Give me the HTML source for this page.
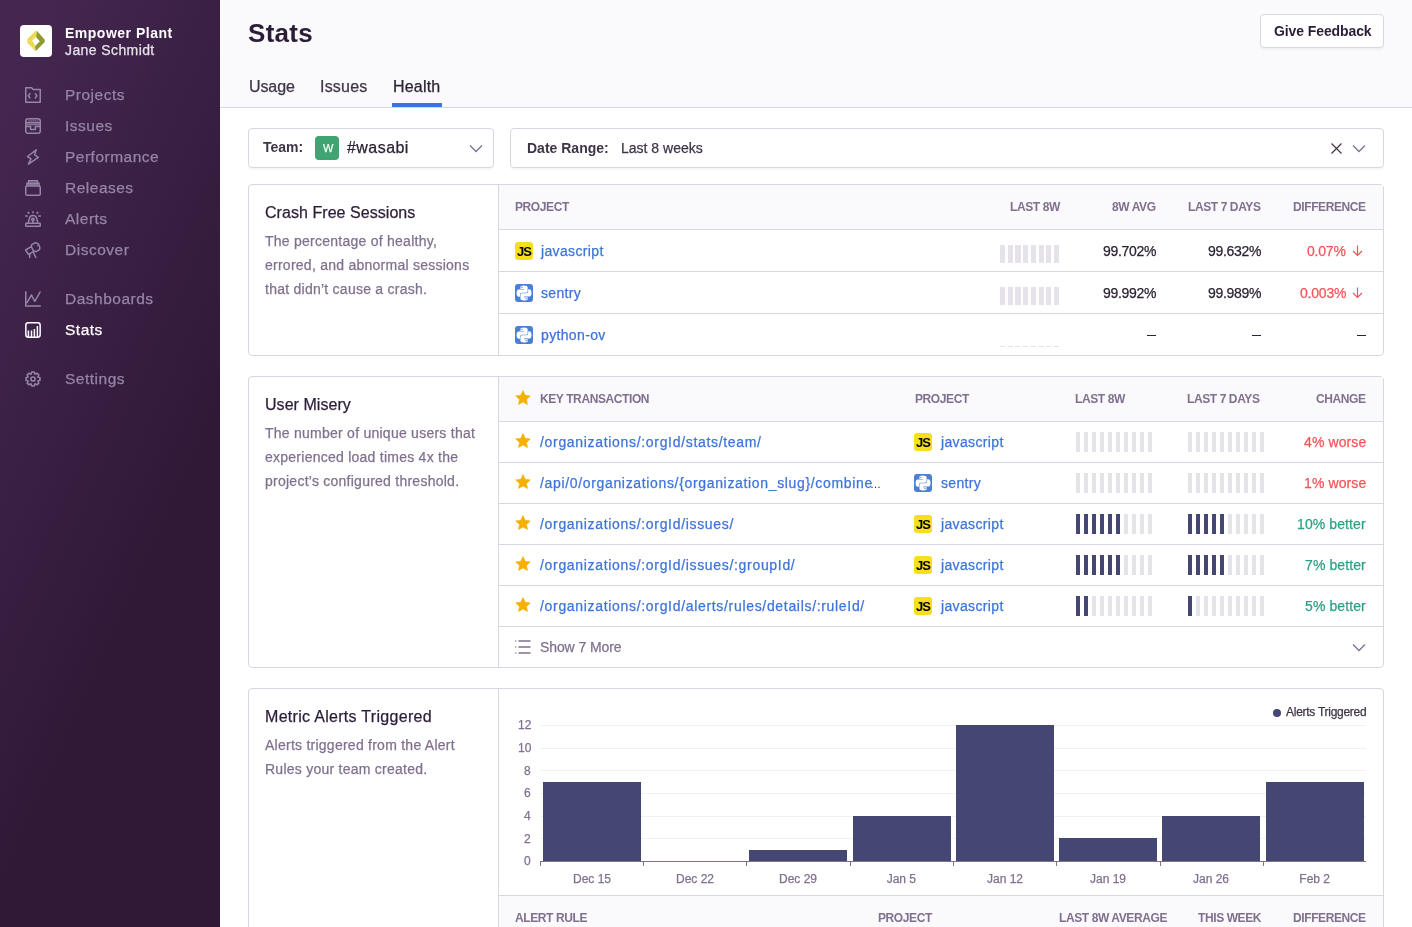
<!DOCTYPE html>
<html><head><meta charset="utf-8">
<style>
*{box-sizing:border-box;margin:0;padding:0}
html,body{width:1412px;height:927px;overflow:hidden;background:#fff;font-family:"Liberation Sans",sans-serif;color:#2B2233}
.abs{position:absolute}
.t{position:absolute;white-space:nowrap;line-height:1;will-change:transform;-webkit-text-stroke:0.25px currentColor}
svg{position:absolute;overflow:visible}
</style></head><body>
<div class="abs" style="left:0;top:0;width:220px;height:927px;background:linear-gradient(294.17deg,#2f1937 35.57%,#452650 92.42%,#452650 92.42%)"></div>
<div class="abs" style="left:20px;top:25px;width:32px;height:32px;background:#fff;border-radius:4px"></div>
<svg style="left:18px;top:23px" width="36" height="36" viewBox="0 0 927 927">
<path d="M465 185L235 415L235 510L440 720L455 590L370 455L470 360L490 210Z" fill="#EEDF63"/>
<path d="M490 205L690 430L690 490L455 725L440 600L560 470L465 370Z" fill="#8F9A2F"/>
<path d="M470 350Q460 445 368 455Q455 470 448 592Q462 478 562 468Q470 460 470 350Z" fill="#fff"/>
<g fill="#DCC521"><circle cx="425" cy="295" r="14"/><circle cx="372" cy="345" r="14"/><circle cx="320" cy="370" r="14"/><circle cx="345" cy="400" r="14"/><circle cx="295" cy="425" r="14"/><circle cx="320" cy="475" r="14"/><circle cx="320" cy="525" r="14"/><circle cx="372" cy="525" r="14"/><circle cx="372" cy="578" r="14"/><circle cx="450" cy="322" r="12"/></g>
</svg>
<div class="t" style="left:65px;top:26.15px;font-size:14px;color:#fff;font-weight:bold;-webkit-text-stroke:0;letter-spacing:0.5px;">Empower Plant</div>
<div class="t" style="left:65px;top:43.15px;font-size:14px;color:#E6E1EA;letter-spacing:0.4px;">Jane Schmidt</div>
<svg style="left:25px;top:86.5px" width="16" height="16" viewBox="0 0 16 16" fill="none" stroke="#9586A5" stroke-width="1.5"><path d="M0.75 15.25V0.75H6.6L8.2 2.5H15.25V15.25Z" stroke-linejoin="round"/><path d="M4.9 6.6L3.3 8.8L4.9 11M10.3 6.6L11.9 8.8L10.3 11" stroke-linecap="round"/></svg>
<div class="t" style="left:65px;top:87.38px;font-size:15.5px;color:#9586A5;letter-spacing:0.5px;">Projects</div>
<svg style="left:25px;top:117.5px" width="16" height="16" viewBox="0 0 16 16" fill="none" stroke="#9586A5" stroke-width="1.5"><rect x="0.75" y="0.75" width="14.5" height="14.5" rx="2.3"/><path d="M1 4.4h14M1 8.4h4.6v3h4.8v-3H15"/><rect x="1.2" y="5.4" width="13.6" height="2" fill="#9586A5" stroke="none" opacity="0.8"/><rect x="3" y="1.8" width="10" height="1.6" fill="#9586A5" stroke="none" opacity="0.45"/></svg>
<div class="t" style="left:65px;top:118.38px;font-size:15.5px;color:#9586A5;letter-spacing:0.5px;">Issues</div>
<svg style="left:25px;top:148.5px" width="16" height="16" viewBox="0 0 16 16" fill="none" stroke="#9586A5" stroke-width="1.5"><path d="M11.2 0.8L2.5 7.5L6 9.8L3.4 15.1L13.4 8.4L9.6 5.9Z" stroke-linejoin="round"/></svg>
<div class="t" style="left:65px;top:149.38px;font-size:15.5px;color:#9586A5;letter-spacing:0.5px;">Performance</div>
<svg style="left:25px;top:179.5px" width="16" height="16" viewBox="0 0 16 16" fill="none" stroke="#9586A5" stroke-width="1.5"><rect x="0.75" y="6.1" width="14.5" height="9.15" rx="1.3"/><path d="M1.9 6.1V3.3H14.1V6.1M3.5 3.3V0.75H12.5V3.3" stroke-linejoin="round"/><rect x="2.6" y="3.9" width="10.8" height="1.6" fill="#9586A5" stroke="none" opacity="0.8"/><rect x="4.2" y="1.4" width="7.6" height="1.3" fill="#9586A5" stroke="none" opacity="0.45"/></svg>
<div class="t" style="left:65px;top:180.38px;font-size:15.5px;color:#9586A5;letter-spacing:0.5px;">Releases</div>
<svg style="left:25px;top:210.5px" width="16" height="16" viewBox="0 0 16 16" fill="none" stroke="#9586A5" stroke-width="1.5"><rect x="0.75" y="12.2" width="14.5" height="3.05" rx="0.5"/><path d="M3.2 12.2L4.3 7.3Q4.8 4.4 8 4.4Q11.2 4.4 11.7 7.3L12.8 12.2"/><circle cx="7.9" cy="8.4" r="1.2"/><path d="M7.9 9.6V12.2M7.9 0.2V2.2M2.7 1L4.3 2.6M13.2 1L11.6 2.6M0.1 5.1H2.7M13.3 5.1H15.9"/></svg>
<div class="t" style="left:65px;top:211.38px;font-size:15.5px;color:#9586A5;letter-spacing:0.5px;">Alerts</div>
<svg style="left:25px;top:241.5px" width="16" height="16" viewBox="0 0 16 16" fill="none" stroke="#9586A5" stroke-width="1.5"><path d="M0.6 8L6.3 4.6L8.8 9.3L3.4 12.3Z" stroke-linejoin="round"/><path d="M6.3 4.6L6.6 2.9L10.2 0.7Q15.6 1.5 14.6 7.6L11 9.6L8.8 9.3" stroke-linejoin="round"/><circle cx="12.6" cy="3.8" r="0.7" fill="#9586A5" stroke="none"/><path d="M4.8 12L4.6 15.5M8.4 10.5L10.9 15.5" stroke-linecap="round"/></svg>
<div class="t" style="left:65px;top:242.38px;font-size:15.5px;color:#9586A5;letter-spacing:0.5px;">Discover</div>
<svg style="left:25px;top:290.5px" width="16" height="16" viewBox="0 0 16 16" fill="none" stroke="#9586A5" stroke-width="1.5"><path d="M0.75 0.2V15.1H15.8"/><path d="M1.5 12.4L6.5 4L9.8 10.3L15.4 0.5" stroke-linejoin="round"/></svg>
<div class="t" style="left:65px;top:291.38px;font-size:15.5px;color:#9586A5;letter-spacing:0.5px;">Dashboards</div>
<svg style="left:25px;top:321.5px" width="16" height="16" viewBox="0 0 16 16" fill="none" stroke="#fff" stroke-width="1.5"><rect x="0.85" y="0.85" width="14.3" height="14.3" rx="2.4"/><path d="M3.4 15V8.4M6.5 15V8.4M9.4 15V7.1M12.4 15V4"/></svg>
<div class="t" style="left:65px;top:322.38px;font-size:15.5px;color:#fff;letter-spacing:0.5px;">Stats</div>
<svg style="left:25px;top:370.5px" width="16" height="16" viewBox="0 0 16 16" fill="none" stroke="#9586A5" stroke-width="1.5"><path d="M6.02 3.19 L6.80 1.00 L9.20 1.00 L9.98 3.19 L10.00 3.20 L12.10 2.20 L13.80 3.90 L12.80 6.00 L12.81 6.02 L15.00 6.80 L15.00 9.20 L12.81 9.98 L12.80 10.00 L13.80 12.10 L12.10 13.80 L10.00 12.80 L9.98 12.81 L9.20 15.00 L6.80 15.00 L6.02 12.81 L6.00 12.80 L3.90 13.80 L2.20 12.10 L3.20 10.00 L3.19 9.98 L1.00 9.20 L1.00 6.80 L3.19 6.02 L3.20 6.00 L2.20 3.90 L3.90 2.20 L6.00 3.20Z" stroke-linejoin="round"/><circle cx="8" cy="8" r="2.1"/></svg>
<div class="t" style="left:65px;top:371.38px;font-size:15.5px;color:#9586A5;letter-spacing:0.5px;">Settings</div>
<div class="abs" style="left:220px;top:0px;width:1192px;height:108px;background:#FAF9FB;border-bottom:1px solid #DBD6E1"></div>
<div class="t" style="left:248px;top:20.29px;font-size:26px;color:#2B1D38;font-weight:bold;-webkit-text-stroke:0;letter-spacing:0.3px;">Stats</div>
<div class="t" style="left:249px;top:79.46px;font-size:16px;color:#3E3446;letter-spacing:-0.1px;">Usage</div>
<div class="t" style="left:320px;top:79.46px;font-size:16px;color:#3E3446;letter-spacing:0.2px;">Issues</div>
<div class="t" style="left:393px;top:79.46px;font-size:16px;color:#2B2233;letter-spacing:0.2px;">Health</div>
<div class="abs" style="left:392px;top:103px;width:50px;height:4px;background:#3D74DB"></div>
<div class="abs" style="left:1260px;top:14px;width:124px;height:34px;background:#fff;border:1px solid #DBD6E1;border-radius:4px;box-shadow:0 2px 0 rgba(43,34,51,0.04)"></div>
<div class="t" style="left:1273.5px;top:24.15px;font-size:14px;color:#2B1D38;font-weight:bold;-webkit-text-stroke:0;letter-spacing:-0.1px;">Give Feedback</div>
<div class="abs" style="left:248px;top:128px;width:246px;height:40px;border:1px solid #DBD6E1;border-radius:4px;box-shadow:0 2px 0 rgba(43,34,51,0.04)"></div>
<div class="t" style="left:263px;top:140.15px;font-size:14px;color:#3E3446;font-weight:bold;-webkit-text-stroke:0;letter-spacing:0px;">Team:</div>
<div class="abs" style="left:315px;top:136px;width:24px;height:24px;background:#3FA372;border-radius:4px"></div>
<div class="t" style="left:322.5px;top:142.69px;font-size:11px;color:rgba(255,255,255,0.92);letter-spacing:0px;">W</div>
<div class="t" style="left:347px;top:139.86px;font-size:16px;color:#2B2233;letter-spacing:0.45px;">#wasabi</div>
<svg style="left:469px;top:144px" width="14" height="9" viewBox="0 0 14 9" fill="none" stroke="#80708F" stroke-width="1.3"><path d="M1 1.5l6 6 6-6"/></svg>
<div class="abs" style="left:510px;top:128px;width:874px;height:40px;border:1px solid #DBD6E1;border-radius:4px;box-shadow:0 2px 0 rgba(43,34,51,0.04)"></div>
<div class="t" style="left:527px;top:141.15px;font-size:14px;color:#3E3446;font-weight:bold;-webkit-text-stroke:0;letter-spacing:0px;">Date Range:</div>
<div class="t" style="left:621px;top:141.15px;font-size:14px;color:#3E3446;letter-spacing:0px;">Last 8 weeks</div>
<svg style="left:1331px;top:143px" width="11" height="11" viewBox="0 0 11 11" fill="none" stroke="#3E3446" stroke-width="1.15"><path d="M0.5 0.5l10 10M10.5 0.5l-10 10"/></svg>
<svg style="left:1352px;top:144px" width="14" height="9" viewBox="0 0 14 9" fill="none" stroke="#80708F" stroke-width="1.3"><path d="M1 1.5l6 6 6-6"/></svg>
<div class="abs" style="left:248px;top:184px;width:1136px;height:172px;border:1px solid #DBD6E1;border-radius:4px;background:#fff"></div>
<div class="abs" style="left:499px;top:185px;width:884px;height:44px;background:#FAF9FB"></div>
<div class="abs" style="left:498px;top:185px;width:1px;height:170px;background:#DBD6E1"></div>
<div class="abs" style="left:499px;top:229px;width:884px;height:1px;background:#DBD6E1"></div>
<div class="abs" style="left:499px;top:271px;width:884px;height:1px;background:#DBD6E1"></div>
<div class="abs" style="left:499px;top:313px;width:884px;height:1px;background:#DBD6E1"></div>
<div class="t" style="left:265px;top:204.66px;font-size:16px;color:#2B1D38;letter-spacing:0.05px;">Crash Free Sessions</div>
<div class="t" style="left:265px;top:233.65px;font-size:14px;color:#80708F;letter-spacing:0.25px;">The percentage of healthy,</div>
<div class="t" style="left:265px;top:257.65px;font-size:14px;color:#80708F;letter-spacing:0.25px;">errored, and abnormal sessions</div>
<div class="t" style="left:265px;top:281.65px;font-size:14px;color:#80708F;letter-spacing:0.25px;">that didn’t cause a crash.</div>
<div class="t" style="left:515px;top:200.84px;font-size:12px;color:#80708F;font-weight:bold;-webkit-text-stroke:0;letter-spacing:-0.4px;">PROJECT</div>
<div class="t" style="right:352px;top:200.84px;font-size:12px;color:#80708F;font-weight:bold;-webkit-text-stroke:0;letter-spacing:-0.4px;">LAST 8W</div>
<div class="t" style="right:256px;top:200.84px;font-size:12px;color:#80708F;font-weight:bold;-webkit-text-stroke:0;letter-spacing:-0.4px;">8W AVG</div>
<div class="t" style="right:151px;top:200.84px;font-size:12px;color:#80708F;font-weight:bold;-webkit-text-stroke:0;letter-spacing:-0.4px;">LAST 7 DAYS</div>
<div class="t" style="right:46px;top:200.84px;font-size:12px;color:#80708F;font-weight:bold;-webkit-text-stroke:0;letter-spacing:-0.4px;">DIFFERENCE</div>
<div class="abs" style="left:515px;top:241.5px;width:18px;height:18px;background:#F7DF1E;border-radius:3px"></div>
<div class="t" style="left:517px;top:244.80px;font-size:13px;color:#000;font-weight:bold;-webkit-text-stroke:0;letter-spacing:-0.9px;">JS</div>
<div class="t" style="left:541px;top:243.65px;font-size:14px;color:#3D74DB;letter-spacing:0.35px;">javascript</div>
<div class="abs" style="left:1000.00px;top:245px;width:5.3px;height:18px;background:#E6E2EA"></div><div class="abs" style="left:1007.70px;top:245px;width:5.3px;height:18px;background:#E6E2EA"></div><div class="abs" style="left:1015.40px;top:245px;width:5.3px;height:18px;background:#E6E2EA"></div><div class="abs" style="left:1023.10px;top:245px;width:5.3px;height:18px;background:#E6E2EA"></div><div class="abs" style="left:1030.80px;top:245px;width:5.3px;height:18px;background:#E6E2EA"></div><div class="abs" style="left:1038.50px;top:245px;width:5.3px;height:18px;background:#E6E2EA"></div><div class="abs" style="left:1046.20px;top:245px;width:5.3px;height:18px;background:#E6E2EA"></div><div class="abs" style="left:1053.90px;top:245px;width:5.3px;height:18px;background:#E6E2EA"></div>
<div class="t" style="right:256px;top:243.65px;font-size:14px;color:#2B2233;letter-spacing:-0.3px;">99.702%</div>
<div class="t" style="right:151px;top:243.65px;font-size:14px;color:#2B2233;letter-spacing:-0.3px;">99.632%</div>
<div class="t" style="right:66px;top:243.65px;font-size:14px;color:#F55459;letter-spacing:-0.2px;">0.07%</div>
<svg style="left:1352px;top:244.5px" width="11" height="11" viewBox="0 0 11 11" fill="none" stroke="#F55459" stroke-width="1.2"><path d="M5.5 0.5v10M1 6l4.5 4.5L10 6"/></svg>
<svg style="left:515px;top:283.5px" width="18" height="18" viewBox="0 0 18 18"><rect width="18" height="18" rx="3" fill="#4B7FD6"/>
<g transform="translate(1.6 1.6) scale(0.62)" fill="#fff"><path d="M14.25.18l.9.2.73.26.59.3.45.32.34.34.25.34.16.33.1.3.04.26.02.2-.01.13V8.5l-.05.63-.13.55-.21.46-.26.38-.3.31-.33.25-.35.19-.35.14-.33.1-.3.07-.26.04-.21.02H8.77l-.69.05-.59.14-.5.22-.41.27-.33.32-.27.35-.2.36-.15.37-.1.35-.07.32-.04.27-.02.21v3.06H3.17l-.21-.03-.28-.07-.32-.12-.35-.18-.36-.26-.36-.36-.35-.46-.32-.59-.28-.73-.21-.88-.14-1.05-.05-1.23.06-1.22.16-1.04.24-.87.32-.71.36-.57.4-.44.42-.33.42-.24.4-.16.36-.1.32-.05.24-.01h.16l.06.01h8.16v-.83H6.18l-.01-2.75-.02-.37.05-.34.11-.31.17-.28.25-.26.31-.23.38-.2.44-.18.51-.15.58-.12.64-.1.71-.06.77-.04.84-.02 1.27.05zm-6.3 1.98l-.23.33-.08.41.08.41.23.34.33.22.41.09.41-.09.33-.22.23-.34.08-.41-.08-.41-.23-.33-.33-.22-.41-.09-.41.09zm13.09 3.950l.28.06.32.12.35.18.36.27.36.35.35.47.32.59.28.73.21.88.14 1.04.05 1.23-.06 1.23-.16 1.04-.24.86-.32.71-.36.57-.4.45-.42.33-.42.24-.4.16-.36.09-.32.05-.24.02-.16-.01h-8.22v.82h5.840l.01 2.76.02.36-.05.34-.11.31-.17.29-.25.25-.31.24-.38.2-.44.17-.51.15-.58.13-.64.09-.71.07-.77.04-.84.01-1.27-.04-1.07-.14-.9-.2-.73-.25-.59-.3-.45-.33-.34-.34-.25-.34-.16-.33-.1-.3-.04-.25-.02-.2.01-.13v-5.34l.05-.64.13-.54.21-.46.26-.38.3-.32.33-.24.35-.2.35-.14.33-.1.3-.06.26-.04.21-.02.13-.01h5.84l.69-.05.59-.14.5-.21.41-.28.33-.32.27-.35.2-.36.15-.36.1-.35.07-.32.04-.28.02-.21V6.070h2.09l.14.01zm-6.47 14.25l-.23.33-.08.41.08.41.23.33.33.23.41.08.41-.08.33-.23.23-.33.08-.41-.08-.41-.23-.33-.33-.23-.41-.08-.41.08z"/></g></svg>
<div class="t" style="left:541px;top:285.65px;font-size:14px;color:#3D74DB;letter-spacing:0.35px;">sentry</div>
<div class="abs" style="left:1000.00px;top:287px;width:5.3px;height:18px;background:#E6E2EA"></div><div class="abs" style="left:1007.70px;top:287px;width:5.3px;height:18px;background:#E6E2EA"></div><div class="abs" style="left:1015.40px;top:287px;width:5.3px;height:18px;background:#E6E2EA"></div><div class="abs" style="left:1023.10px;top:287px;width:5.3px;height:18px;background:#E6E2EA"></div><div class="abs" style="left:1030.80px;top:287px;width:5.3px;height:18px;background:#E6E2EA"></div><div class="abs" style="left:1038.50px;top:287px;width:5.3px;height:18px;background:#E6E2EA"></div><div class="abs" style="left:1046.20px;top:287px;width:5.3px;height:18px;background:#E6E2EA"></div><div class="abs" style="left:1053.90px;top:287px;width:5.3px;height:18px;background:#E6E2EA"></div>
<div class="t" style="right:256px;top:285.65px;font-size:14px;color:#2B2233;letter-spacing:-0.3px;">99.992%</div>
<div class="t" style="right:151px;top:285.65px;font-size:14px;color:#2B2233;letter-spacing:-0.3px;">99.989%</div>
<div class="t" style="right:66px;top:285.65px;font-size:14px;color:#F55459;letter-spacing:-0.2px;">0.003%</div>
<svg style="left:1352px;top:286.5px" width="11" height="11" viewBox="0 0 11 11" fill="none" stroke="#F55459" stroke-width="1.2"><path d="M5.5 0.5v10M1 6l4.5 4.5L10 6"/></svg>
<svg style="left:515px;top:325.5px" width="18" height="18" viewBox="0 0 18 18"><rect width="18" height="18" rx="3" fill="#4B7FD6"/>
<g transform="translate(1.6 1.6) scale(0.62)" fill="#fff"><path d="M14.25.18l.9.2.73.26.59.3.45.32.34.34.25.34.16.33.1.3.04.26.02.2-.01.13V8.5l-.05.63-.13.55-.21.46-.26.38-.3.31-.33.25-.35.19-.35.14-.33.1-.3.07-.26.04-.21.02H8.77l-.69.05-.59.14-.5.22-.41.27-.33.32-.27.35-.2.36-.15.37-.1.35-.07.32-.04.27-.02.21v3.06H3.17l-.21-.03-.28-.07-.32-.12-.35-.18-.36-.26-.36-.36-.35-.46-.32-.59-.28-.73-.21-.88-.14-1.05-.05-1.23.06-1.22.16-1.04.24-.87.32-.71.36-.57.4-.44.42-.33.42-.24.4-.16.36-.1.32-.05.24-.01h.16l.06.01h8.16v-.83H6.18l-.01-2.75-.02-.37.05-.34.11-.31.17-.28.25-.26.31-.23.38-.2.44-.18.51-.15.58-.12.64-.1.71-.06.77-.04.84-.02 1.27.05zm-6.3 1.98l-.23.33-.08.41.08.41.23.34.33.22.41.09.41-.09.33-.22.23-.34.08-.41-.08-.41-.23-.33-.33-.22-.41-.09-.41.09zm13.09 3.950l.28.06.32.12.35.18.36.27.36.35.35.47.32.59.28.73.21.88.14 1.04.05 1.23-.06 1.23-.16 1.04-.24.86-.32.71-.36.57-.4.45-.42.33-.42.24-.4.16-.36.09-.32.05-.24.02-.16-.01h-8.22v.82h5.840l.01 2.76.02.36-.05.34-.11.31-.17.29-.25.25-.31.24-.38.2-.44.17-.51.15-.58.13-.64.09-.71.07-.77.04-.84.01-1.27-.04-1.07-.14-.9-.2-.73-.25-.59-.3-.45-.33-.34-.34-.25-.34-.16-.33-.1-.3-.04-.25-.02-.2.01-.13v-5.34l.05-.64.13-.54.21-.46.26-.38.3-.32.33-.24.35-.2.35-.14.33-.1.3-.06.26-.04.21-.02.13-.01h5.84l.69-.05.59-.14.5-.21.41-.28.33-.32.27-.35.2-.36.15-.36.1-.35.07-.32.04-.28.02-.21V6.070h2.09l.14.01zm-6.47 14.25l-.23.33-.08.41.08.41.23.33.33.23.41.08.41-.08.33-.23.23-.33.08-.41-.08-.41-.23-.33-.33-.23-.41-.08-.41.08z"/></g></svg>
<div class="t" style="left:541px;top:327.65px;font-size:14px;color:#3D74DB;letter-spacing:0.35px;">python-ov</div>
<div class="abs" style="left:1000.0px;top:346px;width:5px;height:1px;background:#E6E2EA"></div>
<div class="abs" style="left:1007.7px;top:346px;width:5px;height:1px;background:#E6E2EA"></div>
<div class="abs" style="left:1015.4px;top:346px;width:5px;height:1px;background:#E6E2EA"></div>
<div class="abs" style="left:1023.1px;top:346px;width:5px;height:1px;background:#E6E2EA"></div>
<div class="abs" style="left:1030.8px;top:346px;width:5px;height:1px;background:#E6E2EA"></div>
<div class="abs" style="left:1038.5px;top:346px;width:5px;height:1px;background:#E6E2EA"></div>
<div class="abs" style="left:1046.2px;top:346px;width:5px;height:1px;background:#E6E2EA"></div>
<div class="abs" style="left:1053.9px;top:346px;width:5px;height:1px;background:#E6E2EA"></div>
<div class="abs" style="left:1147px;top:334.5px;width:9px;height:1.5px;background:#2B2233"></div>
<div class="abs" style="left:1252px;top:334.5px;width:9px;height:1.5px;background:#2B2233"></div>
<div class="abs" style="left:1357px;top:334.5px;width:9px;height:1.5px;background:#2B2233"></div>
<div class="abs" style="left:248px;top:376px;width:1136px;height:292px;border:1px solid #DBD6E1;border-radius:4px;background:#fff"></div>
<div class="abs" style="left:499px;top:377px;width:884px;height:44px;background:#FAF9FB"></div>
<div class="abs" style="left:498px;top:377px;width:1px;height:290px;background:#DBD6E1"></div>
<div class="abs" style="left:499px;top:421px;width:884px;height:1px;background:#DBD6E1"></div>
<div class="abs" style="left:499px;top:462px;width:884px;height:1px;background:#DBD6E1"></div>
<div class="abs" style="left:499px;top:503px;width:884px;height:1px;background:#DBD6E1"></div>
<div class="abs" style="left:499px;top:544px;width:884px;height:1px;background:#DBD6E1"></div>
<div class="abs" style="left:499px;top:585px;width:884px;height:1px;background:#DBD6E1"></div>
<div class="abs" style="left:499px;top:626px;width:884px;height:1px;background:#DBD6E1"></div>
<div class="t" style="left:265px;top:396.66px;font-size:16px;color:#2B1D38;letter-spacing:0.05px;">User Misery</div>
<div class="t" style="left:265px;top:425.65px;font-size:14px;color:#80708F;letter-spacing:0.25px;">The number of unique users that</div>
<div class="t" style="left:265px;top:449.65px;font-size:14px;color:#80708F;letter-spacing:0.25px;">experienced load times 4x the</div>
<div class="t" style="left:265px;top:473.65px;font-size:14px;color:#80708F;letter-spacing:0.25px;">project’s configured threshold.</div>
<svg style="left:515px;top:390px" width="16" height="15" viewBox="0 0 16 15"><path d="M8 0.6l2.2 4.7 5.1.6-3.8 3.5 1 5.1L8 12l-4.5 2.5 1-5.1L0.7 5.9l5.1-.6z" fill="#F5B000" stroke="#F5B000" stroke-width="0.6" stroke-linejoin="round"/></svg>
<div class="t" style="left:539.5px;top:392.84px;font-size:12px;color:#80708F;font-weight:bold;-webkit-text-stroke:0;letter-spacing:-0.4px;">KEY TRANSACTION</div>
<div class="t" style="left:914.5px;top:392.84px;font-size:12px;color:#80708F;font-weight:bold;-webkit-text-stroke:0;letter-spacing:-0.4px;">PROJECT</div>
<div class="t" style="left:1074.5px;top:392.84px;font-size:12px;color:#80708F;font-weight:bold;-webkit-text-stroke:0;letter-spacing:-0.4px;">LAST 8W</div>
<div class="t" style="left:1186.5px;top:392.84px;font-size:12px;color:#80708F;font-weight:bold;-webkit-text-stroke:0;letter-spacing:-0.4px;">LAST 7 DAYS</div>
<div class="t" style="right:46px;top:392.84px;font-size:12px;color:#80708F;font-weight:bold;-webkit-text-stroke:0;letter-spacing:-0.4px;">CHANGE</div>
<svg style="left:515px;top:432.5px" width="16" height="15" viewBox="0 0 16 15"><path d="M8 0.6l2.2 4.7 5.1.6-3.8 3.5 1 5.1L8 12l-4.5 2.5 1-5.1L0.7 5.9l5.1-.6z" fill="#F5B000" stroke="#F5B000" stroke-width="0.6" stroke-linejoin="round"/></svg>
<div class="t" style="left:539.5px;top:435.15px;font-size:14px;color:#3D74DB;letter-spacing:0.68px;">/organizations/:orgId/stats/team/</div>
<div class="abs" style="left:914px;top:433px;width:18px;height:18px;background:#F7DF1E;border-radius:3px"></div>
<div class="t" style="left:916px;top:436.30px;font-size:13px;color:#000;font-weight:bold;-webkit-text-stroke:0;letter-spacing:-0.9px;">JS</div>
<div class="t" style="left:940.5px;top:435.15px;font-size:14px;color:#3D74DB;letter-spacing:0.35px;">javascript</div>
<div class="abs" style="left:1076.00px;top:432px;width:4px;height:20px;background:#E6E2EA"></div><div class="abs" style="left:1084.00px;top:432px;width:4px;height:20px;background:#E6E2EA"></div><div class="abs" style="left:1092.00px;top:432px;width:4px;height:20px;background:#E6E2EA"></div><div class="abs" style="left:1100.00px;top:432px;width:4px;height:20px;background:#E6E2EA"></div><div class="abs" style="left:1108.00px;top:432px;width:4px;height:20px;background:#E6E2EA"></div><div class="abs" style="left:1116.00px;top:432px;width:4px;height:20px;background:#E6E2EA"></div><div class="abs" style="left:1124.00px;top:432px;width:4px;height:20px;background:#E6E2EA"></div><div class="abs" style="left:1132.00px;top:432px;width:4px;height:20px;background:#E6E2EA"></div><div class="abs" style="left:1140.00px;top:432px;width:4px;height:20px;background:#E6E2EA"></div><div class="abs" style="left:1148.00px;top:432px;width:4px;height:20px;background:#E6E2EA"></div>
<div class="abs" style="left:1188.00px;top:432px;width:4px;height:20px;background:#E6E2EA"></div><div class="abs" style="left:1196.00px;top:432px;width:4px;height:20px;background:#E6E2EA"></div><div class="abs" style="left:1204.00px;top:432px;width:4px;height:20px;background:#E6E2EA"></div><div class="abs" style="left:1212.00px;top:432px;width:4px;height:20px;background:#E6E2EA"></div><div class="abs" style="left:1220.00px;top:432px;width:4px;height:20px;background:#E6E2EA"></div><div class="abs" style="left:1228.00px;top:432px;width:4px;height:20px;background:#E6E2EA"></div><div class="abs" style="left:1236.00px;top:432px;width:4px;height:20px;background:#E6E2EA"></div><div class="abs" style="left:1244.00px;top:432px;width:4px;height:20px;background:#E6E2EA"></div><div class="abs" style="left:1252.00px;top:432px;width:4px;height:20px;background:#E6E2EA"></div><div class="abs" style="left:1260.00px;top:432px;width:4px;height:20px;background:#E6E2EA"></div>
<div class="t" style="right:46px;top:435.15px;font-size:14px;color:#F55459;letter-spacing:0.1px;">4% worse</div>
<svg style="left:515px;top:473.5px" width="16" height="15" viewBox="0 0 16 15"><path d="M8 0.6l2.2 4.7 5.1.6-3.8 3.5 1 5.1L8 12l-4.5 2.5 1-5.1L0.7 5.9l5.1-.6z" fill="#F5B000" stroke="#F5B000" stroke-width="0.6" stroke-linejoin="round"/></svg>
<div class="t" style="left:539.5px;top:476.15px;font-size:14px;color:#3D74DB;letter-spacing:0.66px;">/api/0/organizations/{organization_slug}/combine</div>
<div class="t" style="right:531.5px;top:478.69px;font-size:11px;color:#2B2233;letter-spacing:-0.9px;-webkit-text-stroke:0;">…</div>
<svg style="left:914px;top:474px" width="18" height="18" viewBox="0 0 18 18"><rect width="18" height="18" rx="3" fill="#4B7FD6"/>
<g transform="translate(1.6 1.6) scale(0.62)" fill="#fff"><path d="M14.25.18l.9.2.73.26.59.3.45.32.34.34.25.34.16.33.1.3.04.26.02.2-.01.13V8.5l-.05.63-.13.55-.21.46-.26.38-.3.31-.33.25-.35.19-.35.14-.33.1-.3.07-.26.04-.21.02H8.77l-.69.05-.59.14-.5.22-.41.27-.33.32-.27.35-.2.36-.15.37-.1.35-.07.32-.04.27-.02.21v3.06H3.17l-.21-.03-.28-.07-.32-.12-.35-.18-.36-.26-.36-.36-.35-.46-.32-.59-.28-.73-.21-.88-.14-1.05-.05-1.23.06-1.22.16-1.04.24-.87.32-.71.36-.57.4-.44.42-.33.42-.24.4-.16.36-.1.32-.05.24-.01h.16l.06.01h8.16v-.83H6.18l-.01-2.75-.02-.37.05-.34.11-.31.17-.28.25-.26.31-.23.38-.2.44-.18.51-.15.58-.12.64-.1.71-.06.77-.04.84-.02 1.27.05zm-6.3 1.98l-.23.33-.08.41.08.41.23.34.33.22.41.09.41-.09.33-.22.23-.34.08-.41-.08-.41-.23-.33-.33-.22-.41-.09-.41.09zm13.09 3.950l.28.06.32.12.35.18.36.27.36.35.35.47.32.59.28.73.21.88.14 1.04.05 1.23-.06 1.23-.16 1.04-.24.86-.32.71-.36.57-.4.45-.42.33-.42.24-.4.16-.36.09-.32.05-.24.02-.16-.01h-8.22v.82h5.840l.01 2.76.02.36-.05.34-.11.31-.17.29-.25.25-.31.24-.38.2-.44.17-.51.15-.58.13-.64.09-.71.07-.77.04-.84.01-1.27-.04-1.07-.14-.9-.2-.73-.25-.59-.3-.45-.33-.34-.34-.25-.34-.16-.33-.1-.3-.04-.25-.02-.2.01-.13v-5.34l.05-.64.13-.54.21-.46.26-.38.3-.32.33-.24.35-.2.35-.14.33-.1.3-.06.26-.04.21-.02.13-.01h5.84l.69-.05.59-.14.5-.21.41-.28.33-.32.27-.35.2-.36.15-.36.1-.35.07-.32.04-.28.02-.21V6.070h2.09l.14.01zm-6.47 14.25l-.23.33-.08.41.08.41.23.33.33.23.41.08.41-.08.33-.23.23-.33.08-.41-.08-.41-.23-.33-.33-.23-.41-.08-.41.08z"/></g></svg>
<div class="t" style="left:940.5px;top:476.15px;font-size:14px;color:#3D74DB;letter-spacing:0.35px;">sentry</div>
<div class="abs" style="left:1076.00px;top:473px;width:4px;height:20px;background:#E6E2EA"></div><div class="abs" style="left:1084.00px;top:473px;width:4px;height:20px;background:#E6E2EA"></div><div class="abs" style="left:1092.00px;top:473px;width:4px;height:20px;background:#E6E2EA"></div><div class="abs" style="left:1100.00px;top:473px;width:4px;height:20px;background:#E6E2EA"></div><div class="abs" style="left:1108.00px;top:473px;width:4px;height:20px;background:#E6E2EA"></div><div class="abs" style="left:1116.00px;top:473px;width:4px;height:20px;background:#E6E2EA"></div><div class="abs" style="left:1124.00px;top:473px;width:4px;height:20px;background:#E6E2EA"></div><div class="abs" style="left:1132.00px;top:473px;width:4px;height:20px;background:#E6E2EA"></div><div class="abs" style="left:1140.00px;top:473px;width:4px;height:20px;background:#E6E2EA"></div><div class="abs" style="left:1148.00px;top:473px;width:4px;height:20px;background:#E6E2EA"></div>
<div class="abs" style="left:1188.00px;top:473px;width:4px;height:20px;background:#E6E2EA"></div><div class="abs" style="left:1196.00px;top:473px;width:4px;height:20px;background:#E6E2EA"></div><div class="abs" style="left:1204.00px;top:473px;width:4px;height:20px;background:#E6E2EA"></div><div class="abs" style="left:1212.00px;top:473px;width:4px;height:20px;background:#E6E2EA"></div><div class="abs" style="left:1220.00px;top:473px;width:4px;height:20px;background:#E6E2EA"></div><div class="abs" style="left:1228.00px;top:473px;width:4px;height:20px;background:#E6E2EA"></div><div class="abs" style="left:1236.00px;top:473px;width:4px;height:20px;background:#E6E2EA"></div><div class="abs" style="left:1244.00px;top:473px;width:4px;height:20px;background:#E6E2EA"></div><div class="abs" style="left:1252.00px;top:473px;width:4px;height:20px;background:#E6E2EA"></div><div class="abs" style="left:1260.00px;top:473px;width:4px;height:20px;background:#E6E2EA"></div>
<div class="t" style="right:46px;top:476.15px;font-size:14px;color:#F55459;letter-spacing:0.1px;">1% worse</div>
<svg style="left:515px;top:514.5px" width="16" height="15" viewBox="0 0 16 15"><path d="M8 0.6l2.2 4.7 5.1.6-3.8 3.5 1 5.1L8 12l-4.5 2.5 1-5.1L0.7 5.9l5.1-.6z" fill="#F5B000" stroke="#F5B000" stroke-width="0.6" stroke-linejoin="round"/></svg>
<div class="t" style="left:539.5px;top:517.15px;font-size:14px;color:#3D74DB;letter-spacing:0.68px;">/organizations/:orgId/issues/</div>
<div class="abs" style="left:914px;top:515px;width:18px;height:18px;background:#F7DF1E;border-radius:3px"></div>
<div class="t" style="left:916px;top:518.30px;font-size:13px;color:#000;font-weight:bold;-webkit-text-stroke:0;letter-spacing:-0.9px;">JS</div>
<div class="t" style="left:940.5px;top:517.15px;font-size:14px;color:#3D74DB;letter-spacing:0.35px;">javascript</div>
<div class="abs" style="left:1076.00px;top:514px;width:4px;height:20px;background:#444674"></div><div class="abs" style="left:1084.00px;top:514px;width:4px;height:20px;background:#444674"></div><div class="abs" style="left:1092.00px;top:514px;width:4px;height:20px;background:#444674"></div><div class="abs" style="left:1100.00px;top:514px;width:4px;height:20px;background:#444674"></div><div class="abs" style="left:1108.00px;top:514px;width:4px;height:20px;background:#444674"></div><div class="abs" style="left:1116.00px;top:514px;width:4px;height:20px;background:#444674"></div><div class="abs" style="left:1124.00px;top:514px;width:4px;height:20px;background:#E6E2EA"></div><div class="abs" style="left:1132.00px;top:514px;width:4px;height:20px;background:#E6E2EA"></div><div class="abs" style="left:1140.00px;top:514px;width:4px;height:20px;background:#E6E2EA"></div><div class="abs" style="left:1148.00px;top:514px;width:4px;height:20px;background:#E6E2EA"></div>
<div class="abs" style="left:1188.00px;top:514px;width:4px;height:20px;background:#444674"></div><div class="abs" style="left:1196.00px;top:514px;width:4px;height:20px;background:#444674"></div><div class="abs" style="left:1204.00px;top:514px;width:4px;height:20px;background:#444674"></div><div class="abs" style="left:1212.00px;top:514px;width:4px;height:20px;background:#444674"></div><div class="abs" style="left:1220.00px;top:514px;width:4px;height:20px;background:#444674"></div><div class="abs" style="left:1228.00px;top:514px;width:4px;height:20px;background:#E6E2EA"></div><div class="abs" style="left:1236.00px;top:514px;width:4px;height:20px;background:#E6E2EA"></div><div class="abs" style="left:1244.00px;top:514px;width:4px;height:20px;background:#E6E2EA"></div><div class="abs" style="left:1252.00px;top:514px;width:4px;height:20px;background:#E6E2EA"></div><div class="abs" style="left:1260.00px;top:514px;width:4px;height:20px;background:#E6E2EA"></div>
<div class="t" style="right:46px;top:517.15px;font-size:14px;color:#2BA185;letter-spacing:0.1px;">10% better</div>
<svg style="left:515px;top:555.5px" width="16" height="15" viewBox="0 0 16 15"><path d="M8 0.6l2.2 4.7 5.1.6-3.8 3.5 1 5.1L8 12l-4.5 2.5 1-5.1L0.7 5.9l5.1-.6z" fill="#F5B000" stroke="#F5B000" stroke-width="0.6" stroke-linejoin="round"/></svg>
<div class="t" style="left:539.5px;top:558.15px;font-size:14px;color:#3D74DB;letter-spacing:0.68px;">/organizations/:orgId/issues/:groupId/</div>
<div class="abs" style="left:914px;top:556px;width:18px;height:18px;background:#F7DF1E;border-radius:3px"></div>
<div class="t" style="left:916px;top:559.30px;font-size:13px;color:#000;font-weight:bold;-webkit-text-stroke:0;letter-spacing:-0.9px;">JS</div>
<div class="t" style="left:940.5px;top:558.15px;font-size:14px;color:#3D74DB;letter-spacing:0.35px;">javascript</div>
<div class="abs" style="left:1076.00px;top:555px;width:4px;height:20px;background:#444674"></div><div class="abs" style="left:1084.00px;top:555px;width:4px;height:20px;background:#444674"></div><div class="abs" style="left:1092.00px;top:555px;width:4px;height:20px;background:#444674"></div><div class="abs" style="left:1100.00px;top:555px;width:4px;height:20px;background:#444674"></div><div class="abs" style="left:1108.00px;top:555px;width:4px;height:20px;background:#444674"></div><div class="abs" style="left:1116.00px;top:555px;width:4px;height:20px;background:#444674"></div><div class="abs" style="left:1124.00px;top:555px;width:4px;height:20px;background:#E6E2EA"></div><div class="abs" style="left:1132.00px;top:555px;width:4px;height:20px;background:#E6E2EA"></div><div class="abs" style="left:1140.00px;top:555px;width:4px;height:20px;background:#E6E2EA"></div><div class="abs" style="left:1148.00px;top:555px;width:4px;height:20px;background:#E6E2EA"></div>
<div class="abs" style="left:1188.00px;top:555px;width:4px;height:20px;background:#444674"></div><div class="abs" style="left:1196.00px;top:555px;width:4px;height:20px;background:#444674"></div><div class="abs" style="left:1204.00px;top:555px;width:4px;height:20px;background:#444674"></div><div class="abs" style="left:1212.00px;top:555px;width:4px;height:20px;background:#444674"></div><div class="abs" style="left:1220.00px;top:555px;width:4px;height:20px;background:#444674"></div><div class="abs" style="left:1228.00px;top:555px;width:4px;height:20px;background:#E6E2EA"></div><div class="abs" style="left:1236.00px;top:555px;width:4px;height:20px;background:#E6E2EA"></div><div class="abs" style="left:1244.00px;top:555px;width:4px;height:20px;background:#E6E2EA"></div><div class="abs" style="left:1252.00px;top:555px;width:4px;height:20px;background:#E6E2EA"></div><div class="abs" style="left:1260.00px;top:555px;width:4px;height:20px;background:#E6E2EA"></div>
<div class="t" style="right:46px;top:558.15px;font-size:14px;color:#2BA185;letter-spacing:0.1px;">7% better</div>
<svg style="left:515px;top:596.5px" width="16" height="15" viewBox="0 0 16 15"><path d="M8 0.6l2.2 4.7 5.1.6-3.8 3.5 1 5.1L8 12l-4.5 2.5 1-5.1L0.7 5.9l5.1-.6z" fill="#F5B000" stroke="#F5B000" stroke-width="0.6" stroke-linejoin="round"/></svg>
<div class="t" style="left:539.5px;top:599.15px;font-size:14px;color:#3D74DB;letter-spacing:0.68px;">/organizations/:orgId/alerts/rules/details/:ruleId/</div>
<div class="abs" style="left:914px;top:597px;width:18px;height:18px;background:#F7DF1E;border-radius:3px"></div>
<div class="t" style="left:916px;top:600.30px;font-size:13px;color:#000;font-weight:bold;-webkit-text-stroke:0;letter-spacing:-0.9px;">JS</div>
<div class="t" style="left:940.5px;top:599.15px;font-size:14px;color:#3D74DB;letter-spacing:0.35px;">javascript</div>
<div class="abs" style="left:1076.00px;top:596px;width:4px;height:20px;background:#444674"></div><div class="abs" style="left:1084.00px;top:596px;width:4px;height:20px;background:#444674"></div><div class="abs" style="left:1092.00px;top:596px;width:4px;height:20px;background:#E6E2EA"></div><div class="abs" style="left:1100.00px;top:596px;width:4px;height:20px;background:#E6E2EA"></div><div class="abs" style="left:1108.00px;top:596px;width:4px;height:20px;background:#E6E2EA"></div><div class="abs" style="left:1116.00px;top:596px;width:4px;height:20px;background:#E6E2EA"></div><div class="abs" style="left:1124.00px;top:596px;width:4px;height:20px;background:#E6E2EA"></div><div class="abs" style="left:1132.00px;top:596px;width:4px;height:20px;background:#E6E2EA"></div><div class="abs" style="left:1140.00px;top:596px;width:4px;height:20px;background:#E6E2EA"></div><div class="abs" style="left:1148.00px;top:596px;width:4px;height:20px;background:#E6E2EA"></div>
<div class="abs" style="left:1188.00px;top:596px;width:4px;height:20px;background:#444674"></div><div class="abs" style="left:1196.00px;top:596px;width:4px;height:20px;background:#E6E2EA"></div><div class="abs" style="left:1204.00px;top:596px;width:4px;height:20px;background:#E6E2EA"></div><div class="abs" style="left:1212.00px;top:596px;width:4px;height:20px;background:#E6E2EA"></div><div class="abs" style="left:1220.00px;top:596px;width:4px;height:20px;background:#E6E2EA"></div><div class="abs" style="left:1228.00px;top:596px;width:4px;height:20px;background:#E6E2EA"></div><div class="abs" style="left:1236.00px;top:596px;width:4px;height:20px;background:#E6E2EA"></div><div class="abs" style="left:1244.00px;top:596px;width:4px;height:20px;background:#E6E2EA"></div><div class="abs" style="left:1252.00px;top:596px;width:4px;height:20px;background:#E6E2EA"></div><div class="abs" style="left:1260.00px;top:596px;width:4px;height:20px;background:#E6E2EA"></div>
<div class="t" style="right:46px;top:599.15px;font-size:14px;color:#2BA185;letter-spacing:0.1px;">5% better</div>
<svg style="left:515px;top:640px" width="16" height="14" viewBox="0 0 16 14" fill="none" stroke="#80708F" stroke-width="1.3"><path d="M3.5 1h12M3.5 7h12M3.5 13h12M0.3 1h1M0.3 7h1M0.3 13h1"/></svg>
<div class="t" style="left:539.5px;top:640.15px;font-size:14px;color:#80708F;letter-spacing:-0.1px;">Show 7 More</div>
<svg style="left:1352px;top:643px" width="14" height="9" viewBox="0 0 14 9" fill="none" stroke="#80708F" stroke-width="1.3"><path d="M1 1.5l6 6 6-6"/></svg>
<div class="abs" style="left:248px;top:688px;width:1136px;height:300px;border:1px solid #DBD6E1;border-radius:4px;background:#fff"></div>
<div class="abs" style="left:498px;top:689px;width:1px;height:300px;background:#DBD6E1"></div>
<div class="t" style="left:265px;top:708.66px;font-size:16px;color:#2B1D38;letter-spacing:0.3px;">Metric Alerts Triggered</div>
<div class="t" style="left:265px;top:737.65px;font-size:14px;color:#80708F;letter-spacing:0.25px;">Alerts triggered from the Alert</div>
<div class="t" style="left:265px;top:761.65px;font-size:14px;color:#80708F;letter-spacing:0.25px;">Rules your team created.</div>
<div class="abs" style="left:1272.5px;top:708.5px;width:8px;height:8px;border-radius:50%;background:#444674"></div>
<div class="t" style="right:46px;top:706.34px;font-size:12px;color:#3E3446;letter-spacing:-0.27px;">Alerts Triggered</div>
<div class="t" style="right:881px;top:855.34px;font-size:12px;color:#80708F;letter-spacing:0px;">0</div>
<div class="abs" style="left:540px;top:838px;width:826px;height:1px;background:#F2EFF5"></div>
<div class="t" style="right:881px;top:832.68px;font-size:12px;color:#80708F;letter-spacing:0px;">2</div>
<div class="abs" style="left:540px;top:816px;width:826px;height:1px;background:#F2EFF5"></div>
<div class="t" style="right:881px;top:810.01px;font-size:12px;color:#80708F;letter-spacing:0px;">4</div>
<div class="abs" style="left:540px;top:793px;width:826px;height:1px;background:#F2EFF5"></div>
<div class="t" style="right:881px;top:787.34px;font-size:12px;color:#80708F;letter-spacing:0px;">6</div>
<div class="abs" style="left:540px;top:770px;width:826px;height:1px;background:#F2EFF5"></div>
<div class="t" style="right:881px;top:764.68px;font-size:12px;color:#80708F;letter-spacing:0px;">8</div>
<div class="abs" style="left:540px;top:748px;width:826px;height:1px;background:#F2EFF5"></div>
<div class="t" style="right:881px;top:742.01px;font-size:12px;color:#80708F;letter-spacing:0px;">10</div>
<div class="abs" style="left:540px;top:725px;width:826px;height:1px;background:#F2EFF5"></div>
<div class="t" style="right:881px;top:719.34px;font-size:12px;color:#80708F;letter-spacing:0px;">12</div>
<div class="abs" style="left:543px;top:782px;width:98px;height:79px;background:#444674"></div>
<div class="t" style="right:820.375px;top:872.84px;font-size:12px;color:#80708F;letter-spacing:0px;transform:translateX(50%);">Dec 15</div>
<div class="t" style="right:717.125px;top:872.84px;font-size:12px;color:#80708F;letter-spacing:0px;transform:translateX(50%);">Dec 22</div>
<div class="abs" style="left:749px;top:850px;width:98px;height:11px;background:#444674"></div>
<div class="t" style="right:613.875px;top:872.84px;font-size:12px;color:#80708F;letter-spacing:0px;transform:translateX(50%);">Dec 29</div>
<div class="abs" style="left:853px;top:816px;width:98px;height:45px;background:#444674"></div>
<div class="t" style="right:510.625px;top:872.84px;font-size:12px;color:#80708F;letter-spacing:0px;transform:translateX(50%);">Jan 5</div>
<div class="abs" style="left:956px;top:725px;width:98px;height:136px;background:#444674"></div>
<div class="t" style="right:407.375px;top:872.84px;font-size:12px;color:#80708F;letter-spacing:0px;transform:translateX(50%);">Jan 12</div>
<div class="abs" style="left:1059px;top:838px;width:98px;height:23px;background:#444674"></div>
<div class="t" style="right:304.125px;top:872.84px;font-size:12px;color:#80708F;letter-spacing:0px;transform:translateX(50%);">Jan 19</div>
<div class="abs" style="left:1162px;top:816px;width:98px;height:45px;background:#444674"></div>
<div class="t" style="right:200.875px;top:872.84px;font-size:12px;color:#80708F;letter-spacing:0px;transform:translateX(50%);">Jan 26</div>
<div class="abs" style="left:1266px;top:782px;width:98px;height:79px;background:#444674"></div>
<div class="t" style="right:97.625px;top:872.84px;font-size:12px;color:#80708F;letter-spacing:0px;transform:translateX(50%);">Feb 2</div>
<div class="abs" style="left:540px;top:861px;width:826px;height:1px;background:#80708F"></div>
<div class="abs" style="left:540px;top:862px;width:1px;height:4px;background:#80708F"></div>
<div class="abs" style="left:643px;top:862px;width:1px;height:4px;background:#80708F"></div>
<div class="abs" style="left:746px;top:862px;width:1px;height:4px;background:#80708F"></div>
<div class="abs" style="left:850px;top:862px;width:1px;height:4px;background:#80708F"></div>
<div class="abs" style="left:953px;top:862px;width:1px;height:4px;background:#80708F"></div>
<div class="abs" style="left:1056px;top:862px;width:1px;height:4px;background:#80708F"></div>
<div class="abs" style="left:1160px;top:862px;width:1px;height:4px;background:#80708F"></div>
<div class="abs" style="left:1263px;top:862px;width:1px;height:4px;background:#80708F"></div>
<div class="abs" style="left:499px;top:895px;width:884px;height:1px;background:#DBD6E1"></div>
<div class="abs" style="left:499px;top:896px;width:884px;height:40px;background:#FAF9FB"></div>
<div class="t" style="left:515px;top:911.84px;font-size:12px;color:#80708F;font-weight:bold;-webkit-text-stroke:0;letter-spacing:-0.4px;">ALERT RULE</div>
<div class="t" style="left:878px;top:911.84px;font-size:12px;color:#80708F;font-weight:bold;-webkit-text-stroke:0;letter-spacing:-0.4px;">PROJECT</div>
<div class="t" style="right:245px;top:911.84px;font-size:12px;color:#80708F;font-weight:bold;-webkit-text-stroke:0;letter-spacing:-0.4px;">LAST 8W AVERAGE</div>
<div class="t" style="right:151px;top:911.84px;font-size:12px;color:#80708F;font-weight:bold;-webkit-text-stroke:0;letter-spacing:-0.4px;">THIS WEEK</div>
<div class="t" style="right:46px;top:911.84px;font-size:12px;color:#80708F;font-weight:bold;-webkit-text-stroke:0;letter-spacing:-0.4px;">DIFFERENCE</div>
</body></html>
